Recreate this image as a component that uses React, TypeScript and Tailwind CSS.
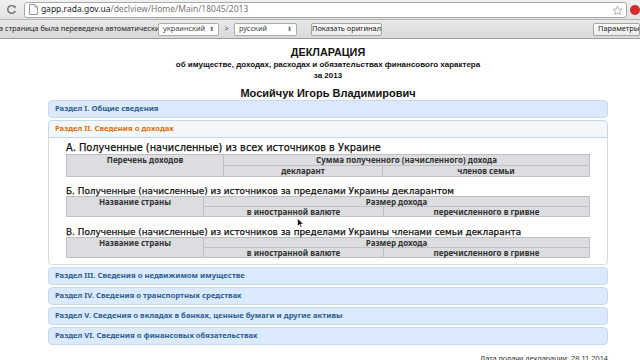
import React from "react";

const ui = { fontFamily: '"Noto Sans", "DejaVu Sans", sans-serif' };
const arial = { fontFamily: '"Liberation Sans", Arial, sans-serif' };
const luc = { fontFamily: '"DejaVu Sans", "Noto Sans", sans-serif' };

function Closed({ label }: { label: string }) {
  return (
    <div
      className="h-[18px] flex items-center pl-[6px] rounded-[4px] border border-[#c5dbec] bg-[#dae9fb] text-[#2e5e92] font-bold text-[7.7px]"
      style={ui}
    >
      {label}
    </div>
  );
}

const thBase =
  "border border-[#bfc0c3] bg-[#dcdde0] text-[#333] font-bold text-[8px] leading-[9px] p-0 text-center align-top";

function Heading({ children, big }: { children: React.ReactNode; big?: boolean }) {
  return (
    <div
      className={
        big
          ? "text-[9.8px] leading-[12px] text-[#111] [-webkit-text-stroke:0.25px_#111]"
          : "text-[8.9px] leading-[10px] text-[#111] [-webkit-text-stroke:0.25px_#111]"
      }
      style={luc}
    >
      {children}
    </div>
  );
}

function TwoLevel({
  first,
  group,
  a,
  b,
  w1,
  w2,
  tall,
}: {
  first: string;
  group: string;
  a: string;
  b: string;
  w1: string;
  w2: string;
  tall?: boolean;
}) {
  const th = thBase + (tall ? " h-[11px]" : " h-[10px]");
  return (
    <table className="w-full border-collapse" style={ui}>
      <tbody>
        <tr>
          <th rowSpan={2} className={th + " " + w1}>
            {first}
          </th>
          <th colSpan={2} className={th}>
            {group}
          </th>
        </tr>
        <tr>
          <th className={th + " " + w2}>{a}</th>
          <th className={th}>{b}</th>
        </tr>
      </tbody>
    </table>
  );
}

export default function App() {
  return (
    <div className="w-[640px] h-[360px] overflow-hidden bg-white relative">
      {/* toolbar */}
      <div className="h-[19px] bg-gradient-to-b from-[#f0f0f0] to-[#e2e2e2] flex items-center">
        <div className="w-[24px] flex justify-center">
          <svg width="11" height="11" viewBox="0 0 12 12">
            <path d="M9.5 3.5 A4.2 4.2 0 1 0 10 7.5" fill="none" stroke="#707070" strokeWidth="1.6" />
            <path d="M7.5 2.2 L10.6 2 L10.2 5.2 Z" fill="#707070" />
          </svg>
        </div>
        <div className="w-[606px] h-[16px] bg-white border border-[#a9a9a9] rounded-[3px] flex items-center relative">
          <svg className="ml-[4px]" width="9" height="11" viewBox="0 0 9 11">
            <path d="M0.5 0.5 H6 L8.5 3 V10.5 H0.5 Z" fill="#f8f8f8" stroke="#9a9a9a" />
            <path d="M6 0.5 V3 H8.5" fill="none" stroke="#9a9a9a" />
          </svg>
          <span className="ml-[3px] text-[8.5px] text-[#222]" style={ui}>
            gapp.rada.gov.ua<span className="text-[#777]">/declview/Home/Main/18045/2013</span>
          </span>
          <svg className="absolute right-[3px] top-[2px]" width="11" height="11" viewBox="0 0 24 24">
            <path
              d="M12 2.5l2.9 6.3 6.8.7-5.1 4.6 1.5 6.8L12 17.4l-6.1 3.5 1.5-6.8L2.3 9.5l6.8-.7z"
              fill="none"
              stroke="#9a9a9a"
              strokeWidth="1.6"
            />
          </svg>
        </div>
        <div className="ml-[3px] w-[10px] h-[10px] rounded-full bg-[#d42b2b]" />
      </div>
      {/* translate bar */}
      <div
        className="h-[20px] bg-gradient-to-b from-[#e8e8e8] to-[#d9d9d9] border-t border-[#b5b5b5] border-b border-b-[#9f9f9f] flex items-center text-[7.4px] text-[#222] whitespace-nowrap"
        style={ui}
      >
        <span className="-ml-[1px] w-[159px]">а страница была переведена автоматически</span>
        <div className="w-[65px] h-[13px] bg-white border border-[#aaa] rounded-[2px] flex items-center justify-between px-[4px] text-[#444]">
          <span>украинский</span>
          <span className="text-[6px] text-[#666]">⬍</span>
        </div>
        <span className="w-[16px] text-center text-[#555]">&gt;</span>
        <div className="w-[67px] h-[13px] bg-white border border-[#aaa] rounded-[2px] flex items-center justify-between px-[4px] text-[#444]">
          <span>русский</span>
          <span className="text-[6px] text-[#666]">⬍</span>
        </div>
        <div className="ml-[14px] w-[74px] h-[13px] bg-gradient-to-b from-[#fdfdfd] to-[#ececec] border border-[#a5a5a5] rounded-[2px] flex items-center justify-center">
          Показать оригинал
        </div>
        <div className="ml-[211px] w-[50px] h-[13px] bg-gradient-to-b from-[#fdfdfd] to-[#ececec] border border-[#a5a5a5] rounded-[2px] flex items-center pl-[4px] overflow-hidden">
          Параметры
        </div>
      </div>

      {/* page */}
      <div className="ml-[48px] w-[560px] flex flex-col items-center text-[#111] whitespace-nowrap" style={arial}>
        <div className="mt-[6px] text-[10.8px] leading-[14px] font-bold">ДЕКЛАРАЦИЯ</div>
        <div className="text-[8px] leading-[11px] font-bold">
          об имуществе, доходах, расходах и обязательствах финансового характера
        </div>
        <div className="text-[8px] leading-[11px] font-bold">за 2013</div>
        <div className="mt-[5px] text-[11px] leading-[14px] font-bold">Мосийчук Игорь Владимирович</div>
      </div>

      <div className="ml-[48px] w-[560px] flex flex-col gap-[2px]">
        <Closed label="Раздел I. Общие сведения" />
        <div className="flex flex-col">
          <div
            className="h-[18px] flex items-center pl-[6px] rounded-t-[4px] border border-[#c7d6e3] bg-[#f4f7f9] text-[#e17009] font-bold text-[7.7px]"
            style={ui}
          >
            Раздел II. Сведения о доходах
          </div>
          <div className="border border-t-0 border-[#d5dde4] rounded-b-[4px] bg-white px-[17px] pt-[4px] pb-[6px]">
            <Heading big>А. Полученные (начисленные) из всех источников в Украине</Heading>
            <TwoLevel
              tall
              first="Перечень доходов"
              group="Сумма полученного (начисленного) дохода"
              a="декларант"
              b="членов семьи"
              w1="w-[157px]"
              w2="w-[159px]"
            />
            <div className="h-[9px]" />
            <Heading>Б. Полученные (начисленные) из источников за пределами Украины декларантом</Heading>
            <TwoLevel
              first="Название страны"
              group="Размер дохода"
              a="в иностранной валюте"
              b="перечисленного в гривне"
              w1="w-[137px]"
              w2="w-[180px]"
            />
            <div className="h-[10px]" />
            <Heading>В. Полученные (начисленные) из источников за пределами Украины членами семьи декларанта</Heading>
            <TwoLevel
              first="Название страны"
              group="Размер дохода"
              a="в иностранной валюте"
              b="перечисленного в гривне"
              w1="w-[137px]"
              w2="w-[180px]"
            />
          </div>
        </div>
        <Closed label="Раздел III. Сведения о недвижимом имуществе" />
        <Closed label="Раздел IV. Сведения о транспортных средствах" />
        <Closed label="Раздел V. Сведения о вкладах в банках, ценные бумаги и другие активы" />
        <Closed label="Раздел VI. Сведения о финансовых обязательствах" />
        <div className="mt-[7px] text-right text-[7.5px] leading-[9px] text-[#333]" style={arial}>
          Дата подачи декларации: 28.11.2014
        </div>
      </div>

      {/* mouse cursor */}
      <svg className="absolute left-[297px] top-[218px]" width="7" height="10" viewBox="0 0 8 12">
        <path d="M0.5 0.5 V10 L2.8 7.8 L4.4 11.3 L5.8 10.7 L4.3 7.3 H7.5 Z" fill="#111" stroke="#fff" strokeWidth="0.7" />
      </svg>
    </div>
  );
}
